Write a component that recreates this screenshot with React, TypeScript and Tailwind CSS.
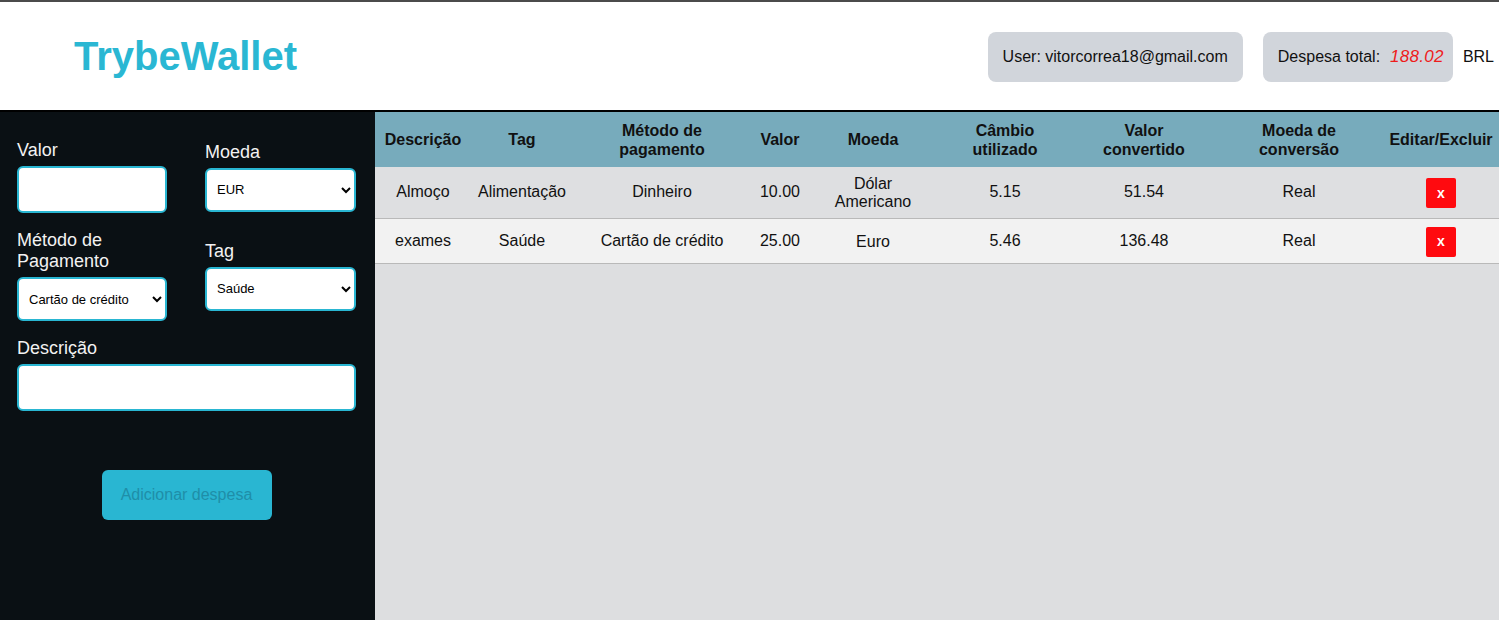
import { ReactNode } from "react";

const expenses = [
  {
    id: 0,
    description: "Almoço",
    tag: "Alimentação",
    method: "Dinheiro",
    value: "10.00",
    currency: "Dólar Americano",
    rate: "5.15",
    converted: "51.54",
  },
  {
    id: 1,
    description: "exames",
    tag: "Saúde",
    method: "Cartão de crédito",
    value: "25.00",
    currency: "Euro",
    rate: "5.46",
    converted: "136.48",
  },
];

function Field({ label, children, width }: { label: ReactNode; children: ReactNode; width: string }) {
  return (
    <label className={`flex flex-col ${width}`}>
      <span className="text-[18px] leading-[21px] text-[#f2f2f2] mb-[5px]">{label}</span>
      {children}
    </label>
  );
}

function Header() {
  return (
    <header className="h-[112px] bg-white border-t-2 border-b-2 border-t-[#4b4b4b] border-b-black flex items-center justify-between pl-[74px] pr-[5px]">
      <h1 className="text-[40px] font-bold text-[#2ab7d3]">TrybeWallet</h1>
      <div className="flex items-center text-[16px] text-[#111] pt-[2px]">
        <div className="h-[50px] px-[15px] flex items-center rounded-lg bg-[#d1d5db] whitespace-nowrap">
          User: vitorcorrea18@gmail.com
        </div>
        <div className="ml-[20px] h-[50px] pl-[15px] pr-[9px] flex items-center rounded-lg bg-[#d1d5db] whitespace-nowrap">
          <span>Despesa total:</span>
          <span className="ml-[10px] text-[17px] italic tracking-[0.3px] text-[#ee1c1c]">
            188.02
          </span>
        </div>
        <span className="ml-[10px]">BRL</span>
      </div>
    </header>
  );
}

function Form() {
  const inputCls =
    "h-[47px] w-full rounded-md border-2 border-[#29b6d2] bg-white px-2 text-[13px] text-black outline-none";
  const selectCls =
    "h-[44px] w-full rounded-md border-2 border-[#29b6d2] bg-white px-[6px] text-[13px] text-black outline-none";
  return (
    <aside className="w-[375px] shrink-0 bg-[#0a1014] px-[17px] pt-[28px]">
      <div className="flex items-center gap-[38px] w-[339px]">
        <Field label="Valor" width="w-[150px]">
          <input className={inputCls} />
        </Field>
        <Field label="Moeda" width="w-[151px]">
          <select className={selectCls} defaultValue="EUR">
            <option>USD</option>
            <option>EUR</option>
          </select>
        </Field>
      </div>
      <div className="flex items-center gap-[38px] w-[339px] mt-[17px]">
        <Field label={<>Método de<br />Pagamento</>} width="w-[150px]">
          <select className={selectCls} defaultValue="Cartão de crédito">
            <option>Dinheiro</option>
            <option>Cartão de crédito</option>
          </select>
        </Field>
        <Field label="Tag" width="w-[151px]">
          <select className={selectCls} defaultValue="Saúde">
            <option>Alimentação</option>
            <option>Saúde</option>
          </select>
        </Field>
      </div>
      <div className="mt-[17px] w-[339px]">
        <Field label="Descrição" width="w-full">
          <input className={inputCls} />
        </Field>
      </div>
      <div className="flex justify-center w-[339px] mt-[59px]">
        <button className="h-[50px] w-[170px] rounded-md bg-[#29b6d2] text-[16px] text-[#1f8ea8]">
          Adicionar despesa
        </button>
      </div>
    </aside>
  );
}

function Table() {
  const heads = [
    "Descrição",
    "Tag",
    <>Método de<br />pagamento</>,
    "Valor",
    "Moeda",
    <>Câmbio<br />utilizado</>,
    <>Valor<br />convertido</>,
    <>Moeda de<br />conversão</>,
    "Editar/Excluir",
  ];
  const widths = ["w-[96px]", "w-[102px]", "w-[178px]", "w-[58px]", "w-[128px]", "w-[136px]", "w-[142px]", "w-[168px]", "w-[116px]"];
  return (
    <main className="flex-1 bg-[#dddee0]">
      <table className="w-full table-fixed border-collapse text-center text-[16px] text-[#111]">
        <colgroup>
          {widths.map((w, i) => (
            <col key={i} className={w} />
          ))}
        </colgroup>
        <thead>
          <tr className="h-[55px] bg-[#77abbc]">
            {heads.map((h, i) => (
              <th key={i} className="font-bold leading-[19px] px-0 whitespace-nowrap">
                {h}
              </th>
            ))}
          </tr>
        </thead>
        <tbody>
          {expenses.map((e, i) => (
            <tr
              key={e.id}
              className={`border-b border-[#b9b9b9] ${i % 2 === 0 ? "bg-[#dedfe1] h-[51px]" : "bg-[#f2f2f2] h-[45px]"}`}
            >
              <td>{e.description}</td>
              <td>{e.tag}</td>
              <td>{e.method}</td>
              <td>{e.value}</td>
              <td className="leading-[18px] px-[18px] pt-[2px]">{e.currency}</td>
              <td>{e.rate}</td>
              <td>{e.converted}</td>
              <td>Real</td>
              <td className="pt-[2px]">
                <button className="h-[30px] w-[30px] rounded-[2px] bg-[#ff0a0f] text-[14px] font-bold text-white">
                  x
                </button>
              </td>
            </tr>
          ))}
        </tbody>
      </table>
    </main>
  );
}

export default function App() {
  return (
    <div className="h-[620px] flex flex-col font-['Liberation_Sans',Arial,sans-serif] overflow-hidden">
      <Header />
      <div className="flex flex-1">
        <Form />
        <Table />
      </div>
    </div>
  );
}
